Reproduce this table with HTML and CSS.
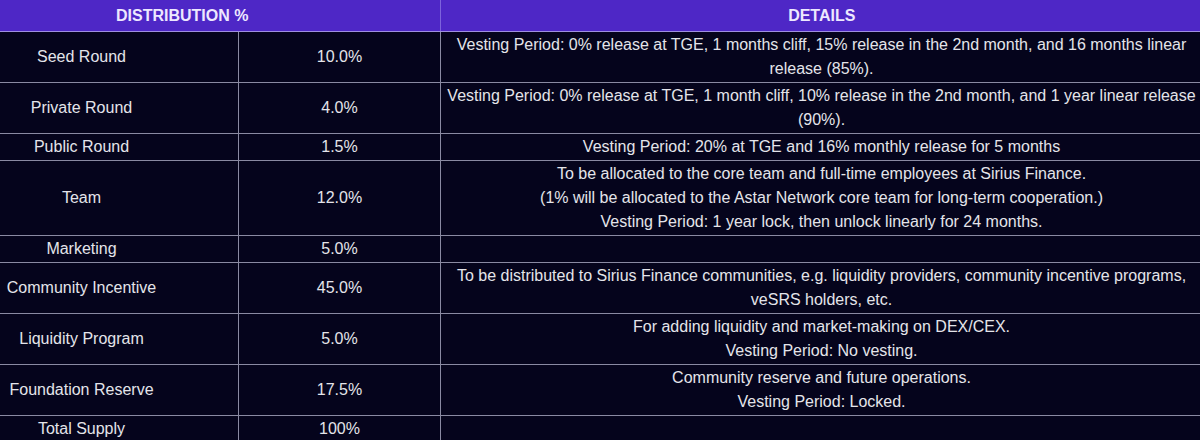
FILE: index.html
```html
<!DOCTYPE html>
<html lang="en">
<head>
<meta charset="utf-8">
<title>Token Distribution</title>
<link rel="stylesheet" href="styles.css">
</head>
<body>
<div class="frame">
<table class="dist">
  <colgroup>
    <col class="c-name">
    <col class="c-pct">
    <col class="c-det">
  </colgroup>
  <thead>
    <tr>
      <th colspan="2" class="h-dist">DISTRIBUTION %</th>
      <th class="h-det">DETAILS</th>
    </tr>
  </thead>
  <tbody>
    <tr>
      <td class="name">Seed Round</td>
      <td>10.0%</td>
      <td class="det">Vesting Period: 0% release at TGE, 1 months cliff, 15% release in the 2nd month, and 16 months linear release (85%).</td>
    </tr>
    <tr>
      <td class="name">Private Round</td>
      <td>4.0%</td>
      <td class="det">Vesting Period: 0% release at TGE, 1 month cliff, 10% release in the 2nd month, and 1 year linear release (90%).</td>
    </tr>
    <tr>
      <td class="name">Public Round</td>
      <td>1.5%</td>
      <td class="det">Vesting Period: 20% at TGE and 16% monthly release for 5 months</td>
    </tr>
    <tr>
      <td class="name">Team</td>
      <td>12.0%</td>
      <td class="det">To be allocated to the core team and full-time employees at Sirius Finance.<br>(1% will be allocated to the Astar Network core team for long-term cooperation.)<br>Vesting Period: 1 year lock, then unlock linearly for 24 months.</td>
    </tr>
    <tr>
      <td class="name">Marketing</td>
      <td>5.0%</td>
      <td class="det"></td>
    </tr>
    <tr>
      <td class="name">Community Incentive</td>
      <td>45.0%</td>
      <td class="det">To be distributed to Sirius Finance communities, e.g. liquidity providers, community incentive programs, veSRS holders, etc.</td>
    </tr>
    <tr>
      <td class="name">Liquidity Program</td>
      <td>5.0%</td>
      <td class="det">For adding liquidity and market-making on DEX/CEX.<br>Vesting Period: No vesting.</td>
    </tr>
    <tr>
      <td class="name">Foundation Reserve</td>
      <td>17.5%</td>
      <td class="det">Community reserve and future operations.<br>Vesting Period: Locked.</td>
    </tr>
    <tr>
      <td class="name">Total Supply</td>
      <td>100%</td>
      <td class="det"></td>
    </tr>
  </tbody>
</table>
</div>
</body>
</html>
```

FILE: styles.css
```css
html, body {
  margin: 0;
  padding: 0;
  background: #05041c;
}
body {
  width: 1200px;
  height: 440px;
  overflow: hidden;
  font-family: "Liberation Sans", Arial, sans-serif;
  color: #e4e4ea;
}
.frame {
  width: 1200px;
  overflow: hidden;
}
.dist {
  margin-left: -76px;
  width: 1278px;
  table-layout: fixed;
  border-collapse: collapse;
  font-size: 16px;
}
.c-name { width: 314px; }
.c-pct { width: 202px; }
.c-det { width: 762px; }

.dist thead th {
  background: #4e27c6;
  color: #ede8ff;
  font-weight: bold;
  font-size: 16px;
  height: 31px;
  padding: 0;
  text-align: center;
  border-bottom: 1px solid #9f8fe0;
  vertical-align: middle;
}
.dist thead th.h-dist {
  border-right: 1px solid #7d63dc;
}
.dist tbody td {
  border: 1px solid #8a8aa2;
  text-align: center;
  vertical-align: middle;
  line-height: 24px;
  padding: 1px 0;
}
.dist tbody td.det {
  padding: 1px 4px;
}
```
